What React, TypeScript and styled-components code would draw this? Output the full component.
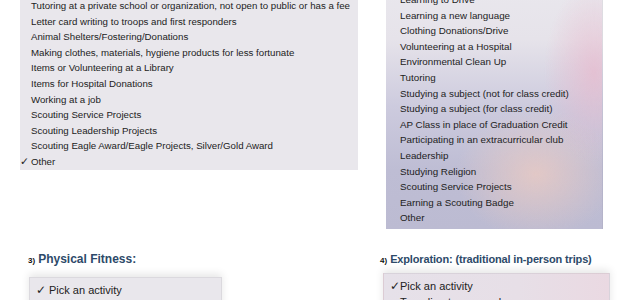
import styled, { createGlobalStyle } from 'styled-components';

const GlobalStyle = createGlobalStyle`
  html, body {
    margin: 0;
    padding: 0;
    background: #ffffff;
    overflow: hidden;
  }
  body {
    font-family: 'Liberation Sans', Arial, Helvetica, sans-serif;
    color: #222222;
  }
`;

const leftItems = [
  'Tutoring at a private school or organization, not open to public or has a fee',
  'Letter card writing to troops and first responders',
  'Animal Shelters/Fostering/Donations',
  'Making clothes, materials, hygiene products for less fortunate',
  'Items or Volunteering at a Library',
  'Items for Hospital Donations',
  'Working at a job',
  'Scouting Service Projects',
  'Scouting Leadership Projects',
  'Scouting Eagle Award/Eagle Projects, Silver/Gold Award',
  'Other',
];

const rightItems = [
  'Learning to Drive',
  'Learning a new language',
  'Clothing Donations/Drive',
  'Volunteering at a Hospital',
  'Environmental Clean Up',
  'Tutoring',
  'Studying a subject (not for class credit)',
  'Studying a subject (for class credit)',
  'AP Class in place of Graduation Credit',
  'Participating in an extracurricular club',
  'Leadership',
  'Studying Religion',
  'Scouting Service Projects',
  'Earning a Scouting Badge',
  'Other',
];

interface MenuProps {
  items: string[];
  checked?: string;
  checkWidth: number;
  fontSize: number;
}

function MenuList({ items, checked, checkWidth, fontSize }: MenuProps) {
  return (
    <>
      {items.map((label, i) => (
        <Item key={i} $size={fontSize}>
          <Check $w={checkWidth} $size={fontSize}>
            {label === checked ? '✓' : ''}
          </Check>
          <span>{label}</span>
        </Item>
      ))}
    </>
  );
}

export default function App() {
  return (
    <Page>
      <GlobalStyle />
      <TopRow>
        <LeftMenu>
          <MenuList items={leftItems} checked='Other' checkWidth={11} fontSize={9.7} />
        </LeftMenu>
        <RightMenu>
          <MenuList items={rightItems} checkWidth={14} fontSize={9.8} />
        </RightMenu>
      </TopRow>
      <BottomRow>
        <Section $width={352}>
          <Heading>
            <Num>3)</Num>
            <Title $size={12}>Physical Fitness:</Title>
          </Heading>
          <Popup $width={193} $top={10}>
            <MenuList
              items={['Pick an activity']}
              checked='Pick an activity'
              checkWidth={13}
              fontSize={11}
            />
          </Popup>
        </Section>
        <Section $width={260}>
          <Heading>
            <Num>4)</Num>
            <Title $size={11} $tight>
              Exploration: (traditional in-person trips)
            </Title>
          </Heading>
          <Popup $width={227} $top={6} $tinted $shift={3}>
            <MenuList
              items={['Pick an activity', 'Traveling to a new place']}
              checked='Pick an activity'
              checkWidth={10}
              fontSize={11}
            />
          </Popup>
        </Section>
      </BottomRow>
    </Page>
  );
}

const Page = styled.div`
  width: 640px;
  height: 300px;
  overflow: hidden;
  display: flex;
  flex-direction: column;
`;

const TopRow = styled.div`
  display: flex;
  align-items: flex-start;
  gap: 28px;
  padding-left: 20px;
  height: 229px;
`;

const LeftMenu = styled.div`
  width: 338px;
  margin-top: -2px;
  background: #e9e7ec;
`;

const RightMenu = styled.div`
  width: 216px;
  margin-top: -8px;
  padding-bottom: 3px;
  background:
    radial-gradient(ellipse 50px 90px at 208px 80px, rgba(232, 184, 204, 0.7), rgba(232, 184, 204, 0) 100%),
    radial-gradient(ellipse 80px 65px at 150px 182px, rgba(232, 202, 196, 0.85), rgba(232, 202, 196, 0) 100%),
    linear-gradient(180deg, #e9e7ed 0%, #e6e3ea 20%, #cdcbde 48%, #bebdd4 75%, #bcbbd2 100%);
  border-right: 1px solid rgba(0, 0, 0, 0.04);
`;

const Item = styled.div<{ $size: number }>`
  display: flex;
  align-items: center;
  height: 15.6px;
  font-size: ${({ $size }) => $size}px;
  line-height: 15.6px;
  white-space: nowrap;
  color: #222222;
`;

const Check = styled.span<{ $w: number; $size: number }>`
  display: inline-block;
  width: ${({ $w }) => $w}px;
  flex-shrink: 0;
  font-family: 'DejaVu Sans', sans-serif;
  font-size: ${({ $size }) => $size + 1}px;
  color: #222222;
`;

const BottomRow = styled.div`
  display: flex;
  padding-left: 28px;
  padding-top: 22px;
`;

const Section = styled.div<{ $width: number }>`
  width: ${({ $width }) => $width}px;
  flex-shrink: 0;
  display: flex;
  flex-direction: column;
`;

const Heading = styled.div`
  display: flex;
  align-items: baseline;
  height: 16px;
  line-height: 16px;
`;

const Num = styled.span`
  font-size: 8px;
  font-weight: bold;
  color: #111111;
  margin-right: 3px;
`;

const Title = styled.span<{ $size: number; $tight?: boolean }>`
  font-size: ${({ $size }) => $size}px;
  letter-spacing: ${({ $tight }) => ($tight ? '-0.15px' : 'normal')};
  font-weight: bold;
  color: #2d4a69;
`;

const Popup = styled.div<{ $width: number; $top: number; $tinted?: boolean; $shift?: number }>`
  box-sizing: border-box;
  width: ${({ $width }) => $width}px;
  margin-top: ${({ $top }) => $top}px;
  margin-left: ${({ $shift }) => $shift ?? 1}px;
  padding: 5px 0 0 6px;
  height: 40px;
  border: 1px solid rgba(0, 0, 0, 0.06);
  border-bottom: none;
  box-shadow: 0 -3px 8px rgba(0, 0, 0, 0.1);
  background: ${({ $tinted }) =>
    $tinted
      ? 'linear-gradient(90deg, #e6e1e9 0%, #e7dfe7 60%, #ead9e2 100%)'
      : '#e9e7ec'};
`;
